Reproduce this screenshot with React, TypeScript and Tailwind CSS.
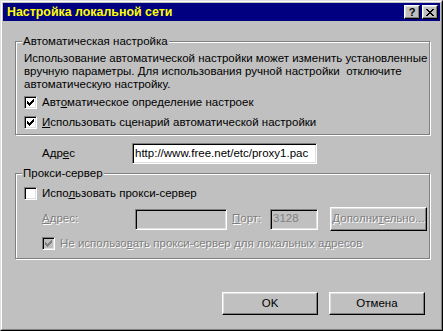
import React from 'react';

const raised =
  'border border-t-white border-l-white border-b-black border-r-black shadow-[inset_-1px_-1px_0_#808080,inset_1px_1px_0_#dfdfdf]';
const sunken =
  'border border-t-[#808080] border-l-[#808080] border-b-white border-r-white shadow-[inset_1px_1px_0_#000,inset_-1px_-1px_0_#dfdfdf]';
const etched = 'border border-[#808080] shadow-[inset_1px_1px_0_#fff,1px_1px_0_#fff]';
const dim = 'text-[#808080] [text-shadow:1px_1px_0_#fff]';

const CheckBox: React.FC<{ checked?: boolean; disabled?: boolean }> = ({ checked, disabled }) => (
  <span className={`w-[13px] h-[13px] shrink-0 flex p-[1px] ${sunken} ${disabled ? 'bg-[#c0c0c0]' : 'bg-white'}`}>
    {checked && (
      <svg width="9" height="9" viewBox="0 0 9 9" shapeRendering="crispEdges">
        <path
          fill={disabled ? '#808080' : '#000'}
          d="M1 3h1v3H1z M2 4h1v3H2z M3 5h1v3H3z M4 4h1v3H4z M5 3h1v3H5z M6 2h1v3H6z M7 1h1v3H7z"
        />
      </svg>
    )}
  </span>
);

const CheckRow: React.FC<{ checked?: boolean; disabled?: boolean; children: React.ReactNode; className?: string }> = ({
  checked,
  disabled,
  children,
  className = '',
}) => (
  <div className={`h-[20px] flex items-center gap-[5px] ${className}`}>
    <CheckBox checked={checked} disabled={disabled} />
    <span className={`whitespace-nowrap leading-[13px] ${disabled ? dim : ''}`}>{children}</span>
  </div>
);

const Group: React.FC<{ title: string; className?: string; children: React.ReactNode }> = ({ title, className = '', children }) => (
  <fieldset className={`w-[415px] ${etched} ${className}`}>
    <legend className="ml-[6px] px-[1px] leading-[13px] bg-[#c0c0c0]">{title}</legend>
    {children}
  </fieldset>
);

export default function App() {
  return (
    <div className="w-[443px] h-[331px] bg-[#c0c0c0] border border-t-[#dfdfdf] border-l-[#dfdfdf] border-b-black border-r-black font-['Liberation_Sans',Arial,sans-serif] text-[11.5px] text-black">
      <div className="h-full border border-t-white border-l-white border-b-[#808080] border-r-[#808080] p-[1px] flex flex-col">
        {/* caption */}
        <div className="h-[18px] shrink-0 bg-[#000080] flex items-center pl-[4px] pr-[2px]">
          <span className="flex-1 text-[#ffff00] font-bold text-[12.4px] leading-none whitespace-nowrap">
            Настройка локальной сети
          </span>
          <span className={`w-[16px] h-[14px] flex items-center justify-center bg-[#c0c0c0] font-bold text-[11px] leading-none ${raised}`}>
            ?
          </span>
          <span className={`w-[16px] h-[14px] ml-[2px] flex items-center justify-center bg-[#c0c0c0] ${raised}`}>
            <svg width="8" height="7" viewBox="0 0 8 7" shapeRendering="crispEdges">
              <path d="M0 0h2v1H0z M6 0h2v1H6z M1 1h2v1H1z M5 1h2v1H5z M2 2h4v1H2z M3 3h2v1H3z M2 4h4v1H2z M1 5h2v1H1z M5 5h2v1H5z M0 6h2v1H0z M6 6h2v1H6z" />
            </svg>
          </span>
        </div>

        <div className="pl-[12px] flex flex-col">
          <Group title="Автоматическая настройка" className="mt-[14px]">
            <div className="pl-[8px] pt-[4px] pb-[2px]">
              <p className="leading-[13px] whitespace-nowrap">
                Использование автоматической настройки может изменить установленные
                <br />
                вручную параметры. Для использования ручной настройки&nbsp; отключите
                <br />
                автоматическую настройку.
              </p>
              <CheckRow checked className="mt-[1px]">
                Авт<u>о</u>матическое определение настроек
              </CheckRow>
              <CheckRow checked>
                <u>И</u>спользовать сценарий автоматической настройки
              </CheckRow>
            </div>
          </Group>

          <div className="mt-[8px] ml-[27px] flex items-center">
            <span className="w-[90px] leading-[13px]">
              Адр<u>е</u>с
            </span>
            <div className={`w-[185px] h-[21px] bg-white flex items-center pl-[2px] whitespace-nowrap ${sunken}`}>
              http://www.free.net/etc/proxy1.pac
            </div>
          </div>

          <Group title="Прокси-сервер" className="mt-[3px]">
            <div className="pl-[8px] pt-[3px] pb-[5px]">
              <CheckRow>
                Испо<u>л</u>ьзовать прокси-сервер
              </CheckRow>
              <div className="mt-[4px] h-[24px] flex items-center">
                <span className={`ml-[18px] w-[93px] ${dim}`}>
                  <u>А</u>дрес:
                </span>
                <div className={`w-[92px] h-[21px] bg-[#c0c0c0] ${sunken}`} />
                <span className={`ml-[5px] w-[38px] ${dim}`}>
                  <u>П</u>орт:
                </span>
                <div className={`w-[48px] h-[21px] bg-[#c0c0c0] flex items-center pl-[2px] text-[#808080] ${sunken}`}>3128</div>
                <div className={`ml-[12px] w-[97px] h-[24px] bg-[#c0c0c0] flex items-center justify-center ${raised}`}>
                  <span className={dim}>
                    Дополни<u>т</u>ельно...
                  </span>
                </div>
              </div>
              <CheckRow checked disabled className="mt-[2px] ml-[18px]">
                Не использо<u>в</u>ать прокси-сервер для локальных адресов
              </CheckRow>
            </div>
          </Group>

          <div className="mt-[33px] pr-[15px] flex justify-end gap-[11px]">
            <div className={`w-[96px] h-[23px] bg-[#c0c0c0] flex items-center justify-center ${raised}`}>OK</div>
            <div className={`w-[96px] h-[23px] bg-[#c0c0c0] flex items-center justify-center ${raised}`}>Отмена</div>
          </div>
        </div>
      </div>
    </div>
  );
}
